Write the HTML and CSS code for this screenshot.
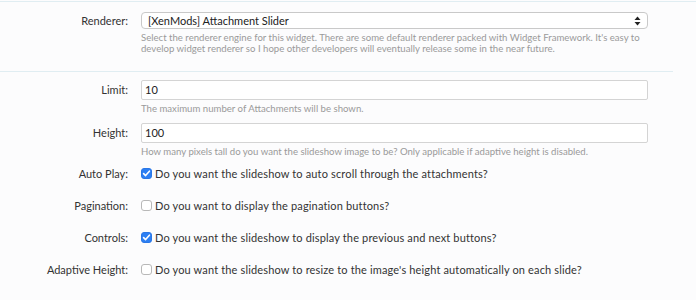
FILE: index.html
```html
<!DOCTYPE html>
<html lang="en">
<head>
    <meta charset="UTF-8">
    <title>Widget Options</title>
    <link rel="stylesheet" href="styles.css">
</head>
<body>
    <div class="rule-top"></div>

    <div class="section first">
        <div class="row">
            <label class="label">Renderer:</label>
            <div class="control">
                <div class="select">
                    <span>[XenMods] Attachment Slider</span>
                    <svg class="arrows" width="7" height="10" viewBox="0 0 7 10">
                        <path d="M3.5 0.5 L6.5 4 L0.5 4 Z" fill="#222"/>
                        <path d="M3.5 9.5 L6.5 6 L0.5 6 Z" fill="#222"/>
                    </svg>
                </div>
                <p class="hint">Select the renderer engine for this widget. There are some default renderer packed with Widget Framework. It's easy to develop widget renderer so I hope other developers will eventually release some in the near future.</p>
            </div>
        </div>
    </div>

    <div class="rule"></div>

    <div class="section">
        <div class="row">
            <label class="label">Limit:</label>
            <div class="control">
                <div class="textbox">10</div>
                <p class="hint">The maximum number of Attachments will be shown.</p>
            </div>
        </div>
        <div class="row">
            <label class="label">Height:</label>
            <div class="control">
                <div class="textbox">100</div>
                <p class="hint last">How many pixels tall do you want the slideshow image to be? Only applicable if adaptive height is disabled.</p>
            </div>
        </div>

        <div class="row check-row">
            <label class="label">Auto Play:</label>
            <div class="check">
                <span class="box on">
                    <svg width="11" height="11" viewBox="0 0 11 11"><path d="M2.6 5.6 L4.6 7.6 L8.4 3.2" fill="none" stroke="#fff" stroke-width="1.6" stroke-linecap="round" stroke-linejoin="round"/></svg>
                </span>
                Do you want the slideshow to auto scroll through the attachments?
            </div>
        </div>
        <div class="row check-row">
            <label class="label">Pagination:</label>
            <div class="check">
                <span class="box"></span>
                Do you want to display the pagination buttons?
            </div>
        </div>
        <div class="row check-row">
            <label class="label">Controls:</label>
            <div class="check">
                <span class="box on">
                    <svg width="11" height="11" viewBox="0 0 11 11"><path d="M2.6 5.6 L4.6 7.6 L8.4 3.2" fill="none" stroke="#fff" stroke-width="1.6" stroke-linecap="round" stroke-linejoin="round"/></svg>
                </span>
                Do you want the slideshow to display the previous and next buttons?
            </div>
        </div>
        <div class="row check-row">
            <label class="label">Adaptive Height:</label>
            <div class="check">
                <span class="box"></span>
                Do you want the slideshow to resize to the image's height automatically on each slide?
            </div>
        </div>
    </div>
</body>
</html>
```

FILE: styles.css
```css
* {
    margin: 0;
    padding: 0;
    box-sizing: border-box;
}
body {
    font-family: 'Lato', 'Noto Sans', sans-serif;
    font-size: 11px;
    color: #333;
    background: #fcfcfd;
    padding-top: 1px;
}
.rule-top {
    height: 1px;
    background: #e0edf2;
}
.rule {
    width: 673px;
    height: 1px;
    background: #e0edf2;
}
.section {
    padding-top: 8px;
}
.section.first {
    padding: 10px 0 17px;
}
.row {
    display: grid;
    grid-template-columns: 128px 507px;
    column-gap: 13px;
    align-items: start;
}
.label {
    text-align: right;
    line-height: 17px;
    color: #333;
}
.select {
    height: 17px;
    border: 1px solid #c9c9c9;
    border-radius: 4px;
    background: #fff;
    display: flex;
    align-items: center;
    justify-content: space-between;
    padding: 0 6px;
    color: #222;
}
.textbox {
    height: 20px;
    border: 1px solid #d4d4d4;
    border-radius: 2px;
    background: #fff;
    padding: 0 3px;
    line-height: 18px;
    color: #222;
}
.row:has(.textbox) .label {
    line-height: 20px;
}
.hint {
    font-size: 9.6px;
    line-height: 11px;
    color: #9a9a9a;
    margin-top: 3px;
    margin-bottom: 9px;
}
.section.first .hint,
.hint.last {
    margin-bottom: 0;
}
.check-row {
    height: 32px;
    align-items: center;
}
.check {
    display: flex;
    align-items: center;
    gap: 3px;
    color: #333;
    letter-spacing: 0.15px;
}
.box {
    width: 11px;
    height: 11px;
    border: 1px solid #b8b8b8;
    border-radius: 3px;
    background: #fff;
    display: inline-flex;
}
.box.on {
    background: #2d7ff3;
    border-color: #2a77e6;
}
.box.on svg {
    margin: -1px;
}
```
